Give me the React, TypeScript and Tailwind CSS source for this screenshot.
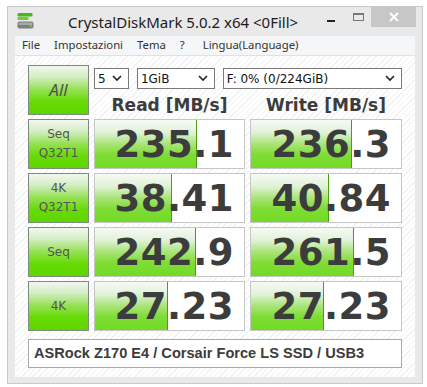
import React from "react";

interface Result {
  label: string[];
  read: string;
  readBar: number;
  write: string;
  writeBar: number;
}

const results: Result[] = [
  { label: ["Seq", "Q32T1"], read: "235.1", readBar: 102, write: "236.3", writeBar: 101 },
  { label: ["4K", "Q32T1"], read: "38.41", readBar: 77, write: "40.84", writeBar: 78 },
  { label: ["Seq"], read: "242.9", readBar: 101, write: "261.5", writeBar: 103 },
  { label: ["4K"], read: "27.23", readBar: 73, write: "27.23", writeBar: 73 },
];

const greenBtn =
  "border border-[#7d8a7d] bg-[linear-gradient(180deg,#f1f8ee_0%,#d6eec8_22%,#93e150_50%,#66da04_75%,#5fd600_100%)]";

function Chevron() {
  return (
    <svg width="10" height="7" viewBox="0 0 10 7" className="shrink-0">
      <path d="M1 1 L5 5 L9 1" fill="none" stroke="#222" strokeWidth="1.6" />
    </svg>
  );
}

function Select({ text, className }: { text: string; className: string }) {
  return (
    <div
      className={`h-[21px] bg-white border border-[#7a7a7a] flex items-center justify-between pl-[3px] pr-[6px] text-[12px] text-[#111] font-['DejaVu_Sans',sans-serif] ${className}`}
    >
      <span>{text}</span>
      <Chevron />
    </div>
  );
}

function ValueBox({ value, bar }: { value: string; bar: number }) {
  return (
    <div className="relative h-[50px] bg-white border border-[#c6c6c6] flex items-center justify-end pr-[10px]">
      <div
        className="absolute left-0 top-0 bottom-0 border-r border-[#4c9e10] bg-[linear-gradient(180deg,#f6faf4_0%,#e2f2da_25%,#a9e478_50%,#7fdd36_72%,#72da24_100%)]"
        style={{ width: bar }}
      />
      <span className="relative text-[37px] leading-none tracking-[0.5px] font-bold text-[#3c3c3c] font-['DejaVu_Sans',sans-serif]">
        {value}
      </span>
    </div>
  );
}

export default function App() {
  return (
    <div className="w-[427px] h-[387px] bg-white pt-[6px] pl-[7px]">
      <div className="w-[416px] h-[378px] bg-[#e9e9e9] border border-[#c9c9c9] flex flex-col">
        {/* title bar */}
        <div className="h-[29px] relative flex items-center">
          <svg width="17" height="16" viewBox="0 0 17 16" className="absolute left-[9px] top-[6px]">
            <rect x="0.5" y="0" width="15" height="3.5" rx="1.2" fill="#49b523" />
            <rect x="0.5" y="4" width="11" height="3" rx="1" fill="#6bd036" />
            <rect x="0.5" y="8.5" width="16" height="7" rx="2" fill="#7d7d7d" />
            <rect x="1.5" y="9.5" width="14" height="2.5" rx="1" fill="#a9a9a9" />
            <rect x="12.5" y="12" width="2.5" height="2" fill="#5ad02a" />
          </svg>
          <span className="ml-[60px] mt-[2px] text-[15px] text-[#1b1b1b] font-['Noto_Sans',sans-serif]">
            CrystalDiskMark 5.0.2 x64 &lt;0Fill&gt;
          </span>
          <div className="absolute left-[319px] top-[13px] w-[8px] h-[2px] bg-[#222]" />
          <div className="absolute left-[345px] top-[6px] w-[11px] h-[8px] border border-[#777] border-t-2" />
          <div className="absolute left-[363px] top-0 w-[45px] h-[20px] bg-[#c7c7c7] flex items-center justify-center">
            <svg width="10" height="10" viewBox="0 0 10 10">
              <path d="M1 1 L9 9 M9 1 L1 9" stroke="#fff" strokeWidth="1.8" />
            </svg>
          </div>
        </div>

        {/* client */}
        <div className="ml-[7px] w-[400px] flex flex-col">
          <div className="h-[20px] bg-[#f5f6f7] border-b border-[#e0e1e2] flex items-center gap-[14px] pl-[7px] text-[11.3px] text-[#333] font-['Noto_Sans',sans-serif]">
            <span>File</span>
            <span>Impostazioni</span>
            <span>Tema</span>
            <span className="mr-[4px]">?</span>
            <span>Lingua(Language)</span>
          </div>

          <div className="h-[321px] bg-[repeating-linear-gradient(135deg,#ffffff_0px,#ffffff_3px,#f1f1f1_3px,#f1f1f1_4px)] pl-[13px] pt-[9px]">
            <div className="grid grid-cols-[61px_151px_152px] gap-x-[5px] gap-y-[4px]">
              <div className={`h-[50px] ${greenBtn} flex items-center justify-center`}>
                <span className="text-[17px] italic text-[#505050] font-['Noto_Sans',sans-serif]">All</span>
              </div>
              <div className="col-span-2 flex flex-col">
                <div className="flex gap-[8px] mt-[3px]">
                  <Select text="5" className="w-[35px]" />
                  <Select text="1GiB" className="w-[78px]" />
                  <Select text="F: 0% (0/224GiB)" className="w-[180px]" />
                </div>
                <div className="grid grid-cols-[151px_152px] gap-x-[5px] mt-[6px] text-[17px] leading-[20px] font-bold text-[#3c3c3c] font-['DejaVu_Sans',sans-serif]">
                  <span className="text-center">Read [MB/s]</span>
                  <span className="text-center">Write [MB/s]</span>
                </div>
              </div>

              {results.map((r, i) => (
                <React.Fragment key={i}>
                  <div
                    className={`h-[50px] ${greenBtn} flex flex-col items-center justify-center text-[12px] leading-[19px] text-[#555] font-['DejaVu_Sans',sans-serif]`}
                  >
                    {r.label.map((l) => (
                      <span key={l}>{l}</span>
                    ))}
                  </div>
                  <ValueBox value={r.read} bar={r.readBar} />
                  <ValueBox value={r.write} bar={r.writeBar} />
                </React.Fragment>
              ))}
            </div>

            <div className="mt-[8px] w-[374px] h-[29px] bg-white border border-[#a9a9a9] flex items-center pl-[5px] text-[14.6px] font-bold text-[#3c3c3c] font-['Liberation_Sans',sans-serif] whitespace-nowrap">
              ASRock Z170 E4 / Corsair Force LS SSD / USB3
            </div>
          </div>
        </div>
      </div>
    </div>
  );
}
